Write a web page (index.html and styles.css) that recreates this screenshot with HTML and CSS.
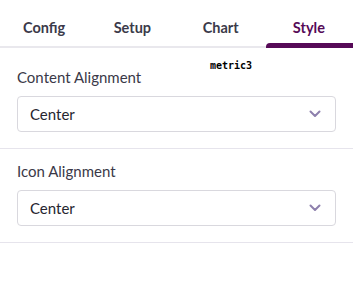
FILE: index.html
```html
<!DOCTYPE html>
<html>
<head>
<meta charset="utf-8">
<link rel="stylesheet" href="styles.css">
</head>
<body>
<div class="panel">
  <div class="tabs">
    <div class="tab">Config</div>
    <div class="tab">Setup</div>
    <div class="tab">Chart</div>
    <div class="tab active">Style</div>
  </div>
  <span class="tag">metric3</span>
  <div class="section first">
    <div class="label">Content Alignment</div>
    <div class="select">
      <span>Center</span>
      <svg class="chev" width="12" height="8" viewBox="0 0 12 8"><path d="M1.5 1.5 L6 6 L10.5 1.5" fill="none" stroke="#8e80ad" stroke-width="2" stroke-linecap="round" stroke-linejoin="round"/></svg>
    </div>
  </div>
  <div class="section">
    <div class="label">Icon Alignment</div>
    <div class="select">
      <span>Center</span>
      <svg class="chev" width="12" height="8" viewBox="0 0 12 8"><path d="M1.5 1.5 L6 6 L10.5 1.5" fill="none" stroke="#8e80ad" stroke-width="2" stroke-linecap="round" stroke-linejoin="round"/></svg>
    </div>
  </div>
</div>
</body>
</html>
```
FILE: styles.css
```css
html, body {
  margin: 0;
  padding: 0;
  background: #fff;
}
body {
  font-family: Lato, "Noto Sans", sans-serif;
  color: #2f2e3d;
}
.panel {
  position: relative;
  width: 353px;
}
.tabs {
  display: flex;
  height: 46px;
  border-bottom: 2px solid #e9e8ed;
  box-sizing: content-box;
}
.tab {
  flex: 1;
  display: flex;
  align-items: center;
  justify-content: center;
  padding-top: 8px;
  box-sizing: border-box;
  font-size: 14.5px;
  font-weight: 700;
  color: #3b3a4a;
  position: relative;
}
.tab.active {
  color: #560a57;
}
.tab.active::after {
  content: "";
  position: absolute;
  left: 1px;
  right: 0;
  bottom: -2px;
  height: 5px;
  background: #560a57;
  border-top-left-radius: 4px;
}
.tag {
  position: absolute;
  left: 210px;
  top: 60px;
  font-family: "DejaVu Sans Mono", monospace;
  font-weight: 700;
  font-size: 10px;
  color: #000;
}
.section {
  padding: 12px 17px 16px 17px;
  border-bottom: 1px solid #e6e4ec;
}
.section.first {
  padding-top: 19px;
}
.label {
  font-size: 15px;
  line-height: 20px;
  color: #3a3948;
  margin-bottom: 9px;
}
.select {
  display: flex;
  align-items: center;
  justify-content: space-between;
  height: 36px;
  box-sizing: border-box;
  border: 1px solid #d9d8de;
  border-radius: 4px;
  padding: 0 14px 0 12px;
  font-size: 15px;
  color: #26252f;
}
.chev {
  display: block;
}
```
